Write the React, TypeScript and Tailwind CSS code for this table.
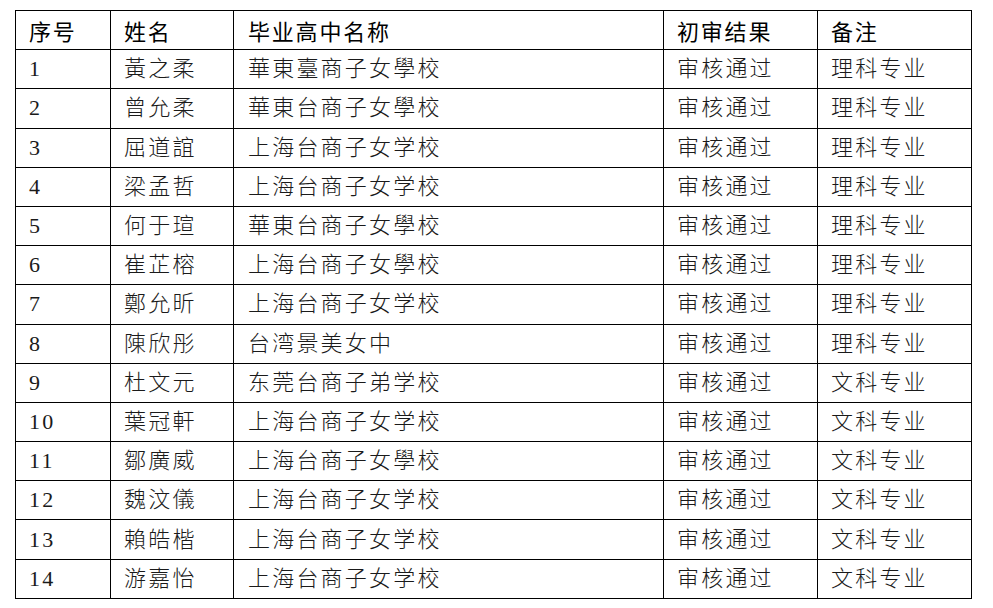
import React from "react";

const rows: [string, string, string, string, string][] = [
  ["1", "黃之柔", "華東臺商子女學校", "审核通过", "理科专业"],
  ["2", "曾允柔", "華東台商子女學校", "审核通过", "理科专业"],
  ["3", "屈道誼", "上海台商子女学校", "审核通过", "理科专业"],
  ["4", "梁孟哲", "上海台商子女学校", "审核通过", "理科专业"],
  ["5", "何于瑄", "華東台商子女學校", "审核通过", "理科专业"],
  ["6", "崔芷榕", "上海台商子女學校", "审核通过", "理科专业"],
  ["7", "鄭允昕", "上海台商子女学校", "审核通过", "理科专业"],
  ["8", "陳欣彤", "台湾景美女中", "审核通过", "理科专业"],
  ["9", "杜文元", "东莞台商子弟学校", "审核通过", "文科专业"],
  ["10", "葉冠軒", "上海台商子女学校", "审核通过", "文科专业"],
  ["11", "鄒廣威", "上海台商子女學校", "审核通过", "文科专业"],
  ["12", "魏汶儀", "上海台商子女学校", "审核通过", "文科专业"],
  ["13", "賴皓楷", "上海台商子女学校", "审核通过", "文科专业"],
  ["14", "游嘉怡", "上海台商子女学校", "审核通过", "文科专业"],
];

const headers = ["序号", "姓名", "毕业高中名称", "初审结果", "备注"];
const widths = ["w-[95px]", "w-[123px]", "w-[430px]", "w-[154px]", "w-[154px]"];
const pads = ["pl-[13px]", "pl-[13px]", "pl-[14px]", "pl-[13px]", "pl-[13px]"];

export default function App() {
  return (
    <div className="w-[993px] h-[608px] bg-white pt-[10px] pl-[15px]">
      <table className="border-collapse table-fixed w-[956px]">
        <colgroup>
          {widths.map((w, i) => (
            <col key={i} className={w} />
          ))}
        </colgroup>
        <thead>
          <tr className="h-[39.2px]">
            {headers.map((h, i) => (
              <th
                key={i}
                className={`border border-black text-left font-normal text-[22px] tracking-[1.8px] text-black leading-none p-0 ${pads[i]} [font-family:'Noto_Sans_CJK_SC',sans-serif]`}
              >
                {h}
              </th>
            ))}
          </tr>
        </thead>
        <tbody>
          {rows.map((r, ri) => (
            <tr key={ri} className="h-[39.2px]">
              {r.map((c, ci) => (
                <td
                  key={ci}
                  className={`border border-black text-left text-[22px] tracking-[2.2px] text-[#1a1a1a] font-light leading-none p-0 ${pads[ci]} [font-family:'Liberation_Serif','Noto_Sans_CJK_SC',serif]`}
                >
                  {c}
                </td>
              ))}
            </tr>
          ))}
        </tbody>
      </table>
    </div>
  );
}
